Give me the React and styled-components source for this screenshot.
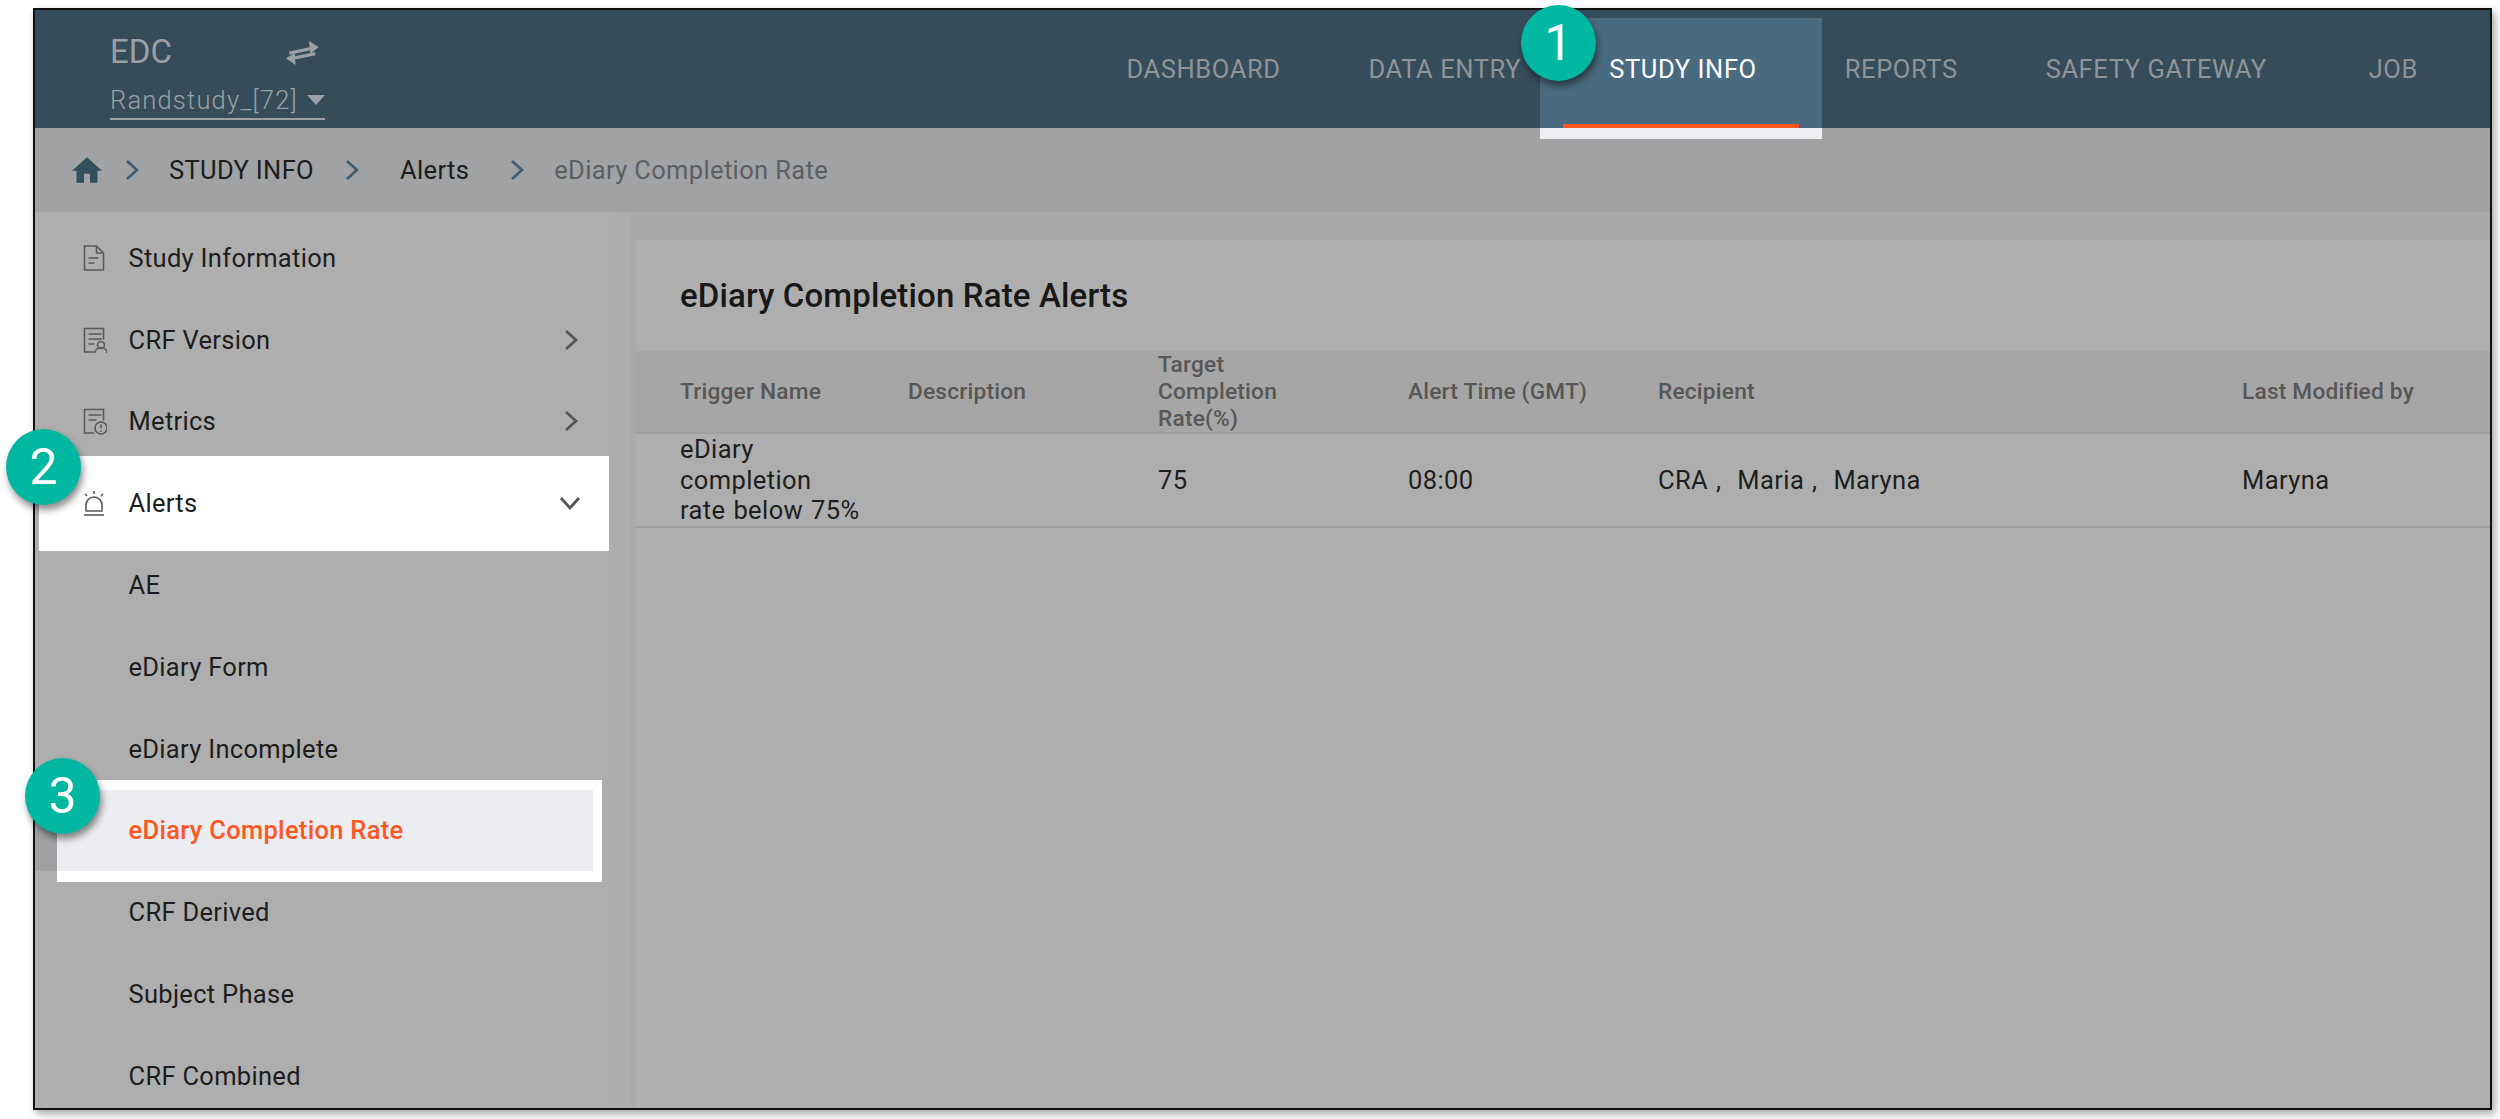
import React from 'react';
import styled, { createGlobalStyle, css } from 'styled-components';

const GlobalStyle = createGlobalStyle`
  html, body { margin: 0; padding: 0; background: #fff; }
  body { font-family: Roboto, "Liberation Sans", sans-serif; }
  * { box-sizing: border-box; }
`;

const Page = styled.div`
  width: 2500px;
  height: 1119px;
  padding: 8px 8px 9px 33px;
  overflow: hidden;
`;

const Frame = styled.div`
  position: relative;
  width: 100%;
  height: 100%;
  border: 2px solid #111;
  box-shadow: 3px 4px 8px rgba(0, 0, 0, .35);
  background: #aeaeae;
  display: flex;
  flex-direction: column;
`;

const Header = styled.header`
  height: 118px;
  flex: none;
  background: #354c5a;
  display: flex;
  justify-content: space-between;
  padding-left: 75px;
`;

const Brand = styled.div`
  width: 215px;
  padding-top: 23px;
  color: #9aa0a3;
`;

const BrandTop = styled.div`
  display: flex;
  align-items: center;
  justify-content: space-between;
  font-size: 33px;
  line-height: 38px;
  padding-right: 6px;
`;

const StudyPicker = styled.div`
  margin-top: 11px;
  height: 38px;
  display: flex;
  align-items: center;
  justify-content: space-between;
  font-size: 25.5px;
  font-weight: 300;
  letter-spacing: 1.2px;
  border-bottom: 2px solid #9aa0a3;
`;

const Caret = styled.span`
  width: 0;
  height: 0;
  border-left: 9px solid transparent;
  border-right: 9px solid transparent;
  border-top: 10px solid #9aa0a3;
`;

const Nav = styled.nav`
  display: flex;
  height: 100%;
  padding-right: 28px;
`;

const Tab = styled.a`
  position: relative;
  display: block;
  padding: 41px 44px 0;
  padding-left: ${p => p.$last ? '58px' : '44px'};
  font-size: 25.5px;
  letter-spacing: .6px;
  line-height: 36px;
  color: #8f9597;

  ${p => p.$active && css`
    color: #fff;
    &::before {
      content: '';
      position: absolute;
      left: -25px;
      right: -21px;
      top: 8px;
      bottom: -11px;
      background: #4a6b7f;
      border-bottom: 11px solid #eceef2;
    }
    &::after {
      content: '';
      position: absolute;
      left: -2px;
      right: 2px;
      bottom: 0;
      height: 4px;
      background: #ff5722;
    }
    span { position: relative; }
  `}
`;

const Breadcrumb = styled.div`
  height: 84px;
  flex: none;
  background: #a1a2a4;
  display: flex;
  align-items: center;
  padding-left: 37px;
  font-size: 25.5px;
  letter-spacing: .35px;
`;

const Crumb = styled.span`
  margin-left: ${p => p.$gap}px;
  color: ${p => p.$muted ? '#5c6063' : '#1c1c1c'};
`;

const Sep = styled.svg`
  margin-left: ${p => p.$gap}px;
  flex: none;
  width: 14px;
  height: 22px;
  fill: none;
  stroke: #3f5f70;
  stroke-width: 2.8;
`;

const Body = styled.div`
  flex: 1;
  min-height: 0;
  display: flex;
  background: #a9a9a9;
`;

const Sidebar = styled.aside`
  width: 577px;
  flex: none;
  background: #aeaeae;
  padding-top: 5px;
  box-shadow: 18px 0 0 #acaeae;
`;

const Item = styled.div`
  position: relative;
  height: 81.8px;
  display: flex;
  align-items: center;
  padding: 0 34px 0 48px;
  font-size: 25.5px;
  color: #1d1d1d;

  ${p => p.$spot && css`
    &::before {
      content: '';
      position: absolute;
      left: 4px;
      right: 3px;
      top: -6px;
      bottom: -7px;
      background: #fff;
    }
  `}

  ${p => p.$selected && css`
    color: #ff5722;
    font-weight: 500;
    background: linear-gradient(to right, #a0a1a3 23px, transparent 23px);
    &::before {
      content: '';
      position: absolute;
      left: 22px;
      right: 10px;
      top: -10px;
      bottom: -11px;
      background: #ecedf1;
      border: solid #fff;
      border-width: 10px 9px 11px 0;
    }
  `}
`;

const ItemIcon = styled.svg`
  position: relative;
  flex: none;
  width: 24px;
  height: 28px;
  color: #5a5a5a;
  fill: none;
  stroke: currentColor;
  stroke-width: 1.6;
`;

const ItemLabel = styled.span`
  position: relative;
  margin-left: ${p => p.$plain ? '45.5px' : '21.5px'};
  letter-spacing: .3px;
`;

const ItemChevron = styled.svg`
  position: relative;
  flex: none;
  margin-left: auto;
  margin-right: ${p => p.$open ? '-3px' : '0'};
  width: ${p => p.$open ? '22px' : '14px'};
  height: ${p => p.$open ? '14px' : '22px'};
  color: #555;
  fill: none;
  stroke: currentColor;
  stroke-width: 2.8;
`;

const Main = styled.main`
  flex: 1;
  min-width: 0;
  margin: 28px 0 0 24px;
  background: #aeaeae;
`;

const Title = styled.h2`
  margin: 0;
  height: 111px;
  display: flex;
  align-items: center;
  padding-left: 44px;
  font-size: 33px;
  letter-spacing: .15px;
  font-weight: 500;
  color: #181818;
`;

const Row = styled.div`
  display: grid;
  grid-template-columns: 228px 250px 250px 250px 584px 1fr;
  align-items: center;
  padding-left: 44px;
  height: ${p => p.$head ? '83px' : '94px'};
  background: ${p => p.$head ? '#a6a6a6' : 'transparent'};
  color: ${p => p.$head ? '#575757' : '#1e1e1e'};
  font-size: ${p => p.$head ? '22.7px' : '25.5px'};
  font-weight: ${p => p.$head ? 500 : 400};
  line-height: ${p => p.$head ? '27px' : '30.5px'};
  letter-spacing: ${p => p.$head ? '.2px' : '.4px'};
  word-spacing: ${p => p.$head ? '0' : '1.2px'};
  border-bottom: 2px solid #a0a0a0;
`;

const Cell = styled.div`
  white-space: nowrap;
`;

const Badge = styled.div`
  position: absolute;
  left: ${p => p.$x}px;
  top: ${p => p.$y}px;
  width: 75px;
  height: 76px;
  border-radius: 50%;
  background: #00b8a2;
  color: #fff;
  font-size: 50px;
  display: flex;
  align-items: center;
  justify-content: center;
  box-shadow: 2px 5px 7px rgba(0, 0, 0, .45);
  z-index: 5;
`;

const chevron = 'M2 2 L12 11 L2 20';

const icons = {
  doc: (
    <>
      <path d="M1.5 2h12l7 7v17h-19z M13.5 2v7h7" />
      <path d="M5.5 14h10M5.5 19h6" />
    </>
  ),
  version: (
    <>
      <path d="M11 26H1.5V2.5h19v11" />
      <path d="M5.5 8h13M5.5 13h13M5.5 18h6" />
      <circle cx="18" cy="19" r="3.5" />
      <path d="M12 27c0-7 12-7 12 0" />
    </>
  ),
  metrics: (
    <>
      <path d="M11 26H1.5V2.5h19v11" />
      <path d="M5.5 8h13M5.5 13h8" />
      <circle cx="18" cy="21" r="6" />
      <path d="M18 17.5v4M18 23.5v1.5" />
    </>
  ),
  alert: (
    <>
      <path d="M3 22v-6a8 8 0 0 1 16 0v6z" />
      <path d="M1 26h20" />
      <path d="M11 2v3M2 5l2 2M20 5l-2 2" />
    </>
  ),
};

const menu = [
  { label: 'Study Information', icon: 'doc' },
  { label: 'CRF Version', icon: 'version', arrow: 'right' },
  { label: 'Metrics', icon: 'metrics', arrow: 'right' },
  { label: 'Alerts', icon: 'alert', arrow: 'down', spot: true },
  { label: 'AE' },
  { label: 'eDiary Form' },
  { label: 'eDiary Incomplete' },
  { label: 'eDiary Completion Rate', selected: true },
  { label: 'CRF Derived' },
  { label: 'Subject Phase' },
  { label: 'CRF Combined' },
];

const tabs = ['DASHBOARD', 'DATA ENTRY', 'STUDY INFO', 'REPORTS', 'SAFETY GATEWAY', 'JOB'];

const App = () => (
  <Page>
    <GlobalStyle />
    <Frame>
      <Header>
        <Brand>
          <BrandTop>
            EDC
            <svg width="33" height="25" viewBox="0 0 33 25" fill="#9aa0a3">
              <path d="M32.7 7L23 1l.6 6.2L3 11.5l.6 3.2 20.4-4.4.5 3.5z" />
              <path d="M0 18.3l9.5 6.7-.3-5.4 20.4-4.4-.6-3.2-20 4.2-.1-3.1z" />
            </svg>
          </BrandTop>
          <StudyPicker>
            Randstudy_[72]
            <Caret />
          </StudyPicker>
        </Brand>
        <Nav>
          {tabs.map(label => (
            <Tab key={label} $active={label === 'STUDY INFO'} $last={label === 'JOB'}>
              <span>{label}</span>
            </Tab>
          ))}
        </Nav>
      </Header>
      <Breadcrumb>
        <svg width="30" height="26" viewBox="2 3 20 17" fill="#33505f">
          <path d="M10 20v-6h4v6h5v-8h3L12 3 2 12h3v8z" />
        </svg>
        <Sep $gap={23} viewBox="0 0 14 22"><path d={chevron} /></Sep>
        <Crumb $gap={30}>STUDY INFO</Crumb>
        <Sep $gap={31} viewBox="0 0 14 22"><path d={chevron} /></Sep>
        <Crumb $gap={41}>Alerts</Crumb>
        <Sep $gap={41} viewBox="0 0 14 22"><path d={chevron} /></Sep>
        <Crumb $gap={30} $muted>eDiary Completion Rate</Crumb>
      </Breadcrumb>
      <Body>
        <Sidebar>
          {menu.map(m => (
            <Item key={m.label} $spot={m.spot} $selected={m.selected}>
              {m.icon && <ItemIcon viewBox="0 0 24 28">{icons[m.icon]}</ItemIcon>}
              <ItemLabel $plain={!m.icon}>{m.label}</ItemLabel>
              {m.arrow === 'right' && (
                <ItemChevron viewBox="0 0 14 22"><path d={chevron} /></ItemChevron>
              )}
              {m.arrow === 'down' && (
                <ItemChevron $open viewBox="0 0 22 14"><path d="M2 2 L11 12 L20 2" /></ItemChevron>
              )}
            </Item>
          ))}
        </Sidebar>
        <Main>
          <Title>eDiary Completion Rate Alerts</Title>
          <Row $head>
            <Cell>Trigger Name</Cell>
            <Cell>Description</Cell>
            <Cell>Target<br />Completion<br />Rate(%)</Cell>
            <Cell>Alert Time (GMT)</Cell>
            <Cell>Recipient</Cell>
            <Cell>Last Modified by</Cell>
          </Row>
          <Row>
            <Cell>eDiary<br />completion<br />rate below 75%</Cell>
            <Cell />
            <Cell>75</Cell>
            <Cell>08:00</Cell>
            <Cell>CRA ,&nbsp; Maria ,&nbsp; Maryna</Cell>
            <Cell>Maryna</Cell>
          </Row>
        </Main>
      </Body>
      <Badge $x={1486} $y={-5}>1</Badge>
      <Badge $x={-29} $y={419}>2</Badge>
      <Badge $x={-10} $y={748}>3</Badge>
    </Frame>
  </Page>
);

export default App;
